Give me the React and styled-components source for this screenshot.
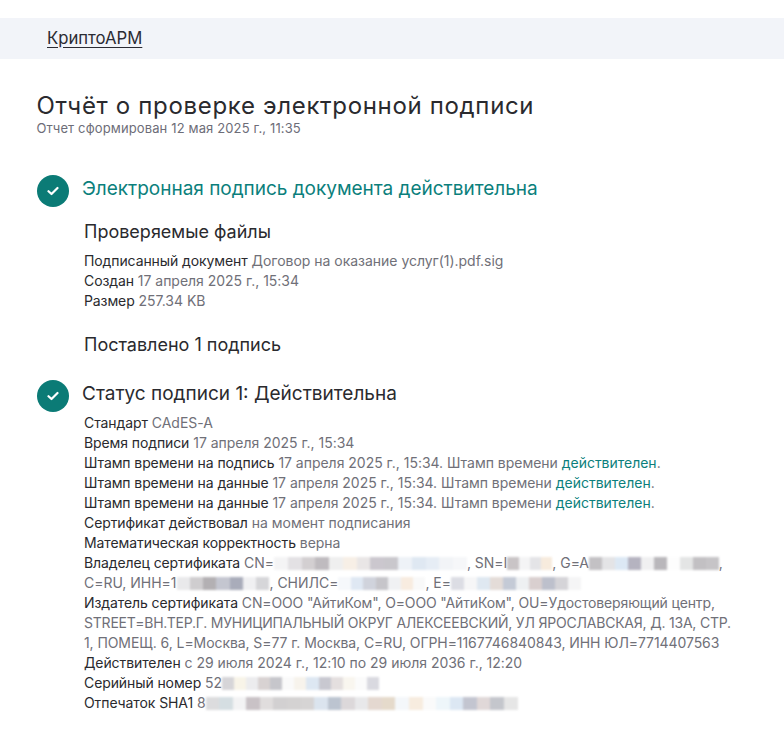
import React from "react";
import styled, { createGlobalStyle } from "styled-components";

const Global = createGlobalStyle`
  html, body {
    margin: 0;
    padding: 0;
    background: #fff;
    font-family: Inter, "Noto Sans", sans-serif;
  }
`;

const Page = styled.div`
  width: 784px;
  height: 752px;
  overflow: hidden;
  padding-top: 18px;
  box-sizing: border-box;
`;

const Header = styled.div`
  height: 41px;
  box-sizing: border-box;
  background: #f2f4f9;
  padding: 0 0 2px 47px;
  display: flex;
  align-items: center;
`;

const Logo = styled.a`
  font-size: 16.7px;
  line-height: 20px;
  color: #2b2b33;
  text-decoration: underline;
  text-underline-offset: 2.5px;
`;

const Main = styled.div`
  padding: 32px 37px 0;
`;

const Title = styled.h1`
  margin: 0 0 0 -0.5px;
  font-size: 24px;
  line-height: 30px;
  font-weight: 400;
  letter-spacing: 0.67px;
  color: #2a2a2e;
`;

const Generated = styled.div`
  margin-left: -0.5px;
  font-size: 13px;
  line-height: 14px;
  color: #6d6d78;
  letter-spacing: 0.13px;
`;

const StatusRow = styled.div`
  display: flex;
  align-items: flex-start;
  gap: 13px;
  margin-top: ${(p) => p.$top}px;
`;

const Badge = styled.div`
  width: 32px;
  height: 32px;
  border-radius: 50%;
  background: #0b7b76;
  display: flex;
  align-items: center;
  justify-content: center;
  flex: none;
`;

const StatusText = styled.div`
  margin-top: 1px;
  font-size: 19px;
  line-height: 26px;
  letter-spacing: ${(p) => (p.$accent ? "-0.02px" : "0")};
  color: ${(p) => (p.$accent ? "#0b7f7c" : "#2a2a2e")};
`;

const Section = styled.div`
  padding: ${(p) => p.$top || 0}px 0 0 47px;
`;

const Subtitle = styled.h2`
  margin: ${(p) => p.$top}px 0 ${(p) => p.$bottom}px;
  font-size: 18px;
  line-height: 24px;
  font-weight: 400;
  color: #2a2a2e;
`;

const Line = styled.div`
  font-size: 14px;
  line-height: 20px;
  letter-spacing: -0.02px;
  color: #707078;
  width: 660px;
`;

const Label = styled.span`
  color: #2a2a2e;
  letter-spacing: -0.1px;
`;

const Tight = styled.span`
  letter-spacing: ${(p) => p.$spacing}px;
`;

const Link = styled.span`
  color: #0b7f7c;
`;

const Blur = styled.span`
  display: inline-flex;
  vertical-align: -2px;
  height: 13px;
  filter: blur(1.1px);
`;

const Cell = styled.span`
  display: block;
  height: 100%;
`;

// размытые участки из скриншота
const BLURS = {
  owner: ["#f4f4f5", "#e3e1e4", "#d3cfd1", "#bfbbbf", "#efefef", "#f7efe6", "#e9e6e6", "#cbc7ce", "#c9c7cc", "#eef2f7", "#dfe8f2", "#e6edf5", "#f2f4f7", "#f6f7f9"],
  sn: ["#c9c4c6", "#f4f4f5", "#e4e4e7", "#f7ebdd"],
  given: ["#c3c1c4", "#e4e4e6", "#dce8f4", "#b5b3c0", "#f0f0f1", "#b9b7bb", "#fdfdfd", "#e4e5e5", "#c2c0c3", "#c6c4c7"],
  inn: ["#e9e9eb", "#cfcdcf", "#b3b0b3", "#c4c6d0", "#a9acba", "#f0f0f2", "#d6d6d9"],
  snils: ["#f6f8fb", "#dfe8f3", "#d0d3dc", "#c6c5ca", "#f0f1f3", "#f8ece0", "#f9f9f9"],
  email: ["#dcdde4", "#f6f6f7", "#dfe8f1", "#e4dcd8", "#c4cad6", "#eef0f2", "#d9cfcf", "#bdc0cc", "#d5d4d8", "#f5f5f6"],
  serial: ["#d6d5d8", "#f8f4e8", "#ececee", "#d8d2d2", "#c6c6cb", "#fafafa", "#f7f3ec", "#dde7f2", "#c8c8d0", "#e4dfdf", "#f9f6ef", "#fbfbfb", "#d9d9e0"],
  sha: ["#dcdcde", "#d5dee2", "#f3f3f4", "#c9c2c6", "#e0dddd", "#d2d0d1", "#d4d2d2", "#d6d4d4", "#dbe4ee", "#bcc4d0", "#dcd8da", "#e8e8ea", "#e4d8d0", "#e5dacb", "#f4f7fa", "#f7ecdf", "#fafafa", "#eef6fa", "#dce7f3", "#c3c5d0", "#e0d8d8", "#c4c6cc", "#e6e6e6"],
};

const Redacted = ({ width, tones }) => (
  <Blur>
    {tones.map((tone, i) => (
      <Cell key={i} style={{ width: width / tones.length, background: tone }} />
    ))}
  </Blur>
);

const Check = () => (
  <svg width="12" height="10" viewBox="0 0 12 10" fill="none">
    <path d="M1.5 5.2 4.5 8 10.5 2" stroke="#fff" strokeWidth="2.2" strokeLinecap="round" strokeLinejoin="round" />
  </svg>
);

const Row = ({ label, children }) => (
  <Line>
    <Label>{label}</Label> {children}
  </Line>
);

const App = () => (
  <Page>
    <Global />
    <Header>
      <Logo>КриптоАРМ</Logo>
    </Header>
    <Main>
      <Title>Отчёт о проверке электронной подписи</Title>
      <Generated>Отчет сформирован 12 мая 2025 г., 11:35</Generated>

      <StatusRow $top={40}>
        <Badge>
          <Check />
        </Badge>
        <StatusText $accent>Электронная подпись документа действительна</StatusText>
      </StatusRow>

      <Section>
        <Subtitle $top={13} $bottom={7}>Проверяемые файлы</Subtitle>
        <Row label="Подписанный документ">Договор на оказание услуг(1).pdf.sig</Row>
        <Row label="Создан">17 апреля 2025 г., 15:34</Row>
        <Row label="Размер">257.34 KB</Row>
        <Subtitle $top={22} $bottom={0}>Поставлено 1 подпись</Subtitle>
      </Section>

      <StatusRow $top={23}>
        <Badge>
          <Check />
        </Badge>
        <StatusText>Статус подписи 1: Действительна</StatusText>
      </StatusRow>

      <Section $top={1}>
        <Row label="Стандарт">CAdES-A</Row>
        <Row label="Время подписи">17 апреля 2025 г., 15:34</Row>
        <Row label="Штамп времени на подпись">
          17 апреля 2025 г., 15:34. Штамп времени <Link>действителен</Link>.
        </Row>
        <Row label="Штамп времени на данные">
          17 апреля 2025 г., 15:34. Штамп времени <Link>действителен</Link>.
        </Row>
        <Row label="Штамп времени на данные">
          17 апреля 2025 г., 15:34. Штамп времени <Link>действителен</Link>.
        </Row>
        <Row label="Сертификат действовал">на момент подписания</Row>
        <Row label="Математическая корректность">верна</Row>
        <Row label="Владелец сертификата">
          CN=<Redacted width={193} tones={BLURS.owner} />, SN=I<Redacted width={45} tones={BLURS.sn} />, G=A<Redacted width={130} tones={BLURS.given} />,
          {" "}C=RU, ИНН=1<Redacted width={93} tones={BLURS.inn} />, СНИЛС=<Redacted width={87} tones={BLURS.snils} />, E=<Redacted width={130} tones={BLURS.email} />
        </Row>
        <Row label="Издатель сертификата">
          <Tight $spacing={-0.14}>CN=ООО "АйтиКом", O=ООО "АйтиКом", OU=Удостоверяющий центр,</Tight>
          <br />
          <Tight $spacing={-0.21}>STREET=ВН.ТЕР.Г. МУНИЦИПАЛЬНЫЙ ОКРУГ АЛЕКСЕЕВСКИЙ, УЛ ЯРОСЛАВСКАЯ, Д. 13А, СТР.</Tight>
          <br />
          <Tight $spacing={-0.08}>1, ПОМЕЩ. 6, L=Москва, S=77 г. Москва, C=RU, ОГРН=1167746840843, ИНН ЮЛ=7714407563</Tight>
        </Row>
        <Row label="Действителен">с 29 июля 2024 г., 12:10 по 29 июля 2036 г., 12:20</Row>
        <Row label="Серийный номер">
          52<Redacted width={157} tones={BLURS.serial} />
        </Row>
        <Row label="Отпечаток SHA1">
          8<Redacted width={312} tones={BLURS.sha} />
        </Row>
      </Section>
    </Main>
  </Page>
);

export default App;
